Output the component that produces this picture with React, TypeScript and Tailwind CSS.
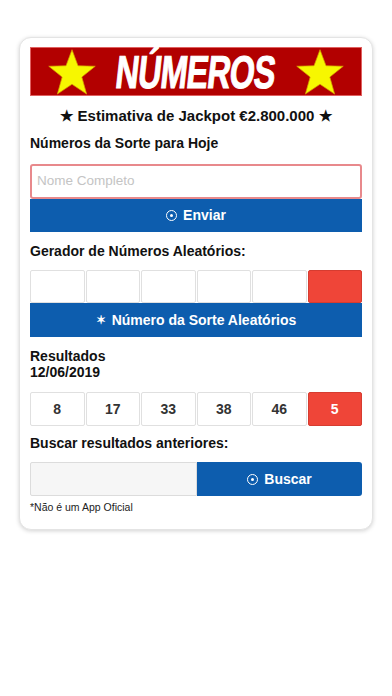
const results = ["8", "17", "33", "38", "46"];

function Star() {
  return (
    <svg viewBox="0 0 100 95" className="h-[46px] w-[48px] shrink-0">
      <polygon
        points="50,1 62.5,34.5 98.5,35.5 70.5,58 80.5,93.5 50,73 19.5,93.5 29.5,58 1.5,35.5 37.5,34.5"
        fill="#f7f700"
        stroke="#d49a00"
        strokeWidth="1.5"
        strokeLinejoin="round"
      />
    </svg>
  );
}

function Dot() {
  return (
    <span className="mr-1.5 inline-flex h-[11px] w-[11px] items-center justify-center rounded-full border-[1.5px] border-white">
      <span className="h-[3px] w-[3px] rounded-full bg-white" />
    </span>
  );
}

export default function App() {
  return (
    <div
      className="min-h-[696px] bg-white pt-[37px]"
      style={{ fontFamily: '"Liberation Sans", Arial, sans-serif' }}
    >
      <div className="mx-[19px] w-[354px] rounded-[12px] border border-[#e4e4e4] bg-white px-[10px] pt-[9px] pb-[15px] shadow-[0_1px_4px_rgba(0,0,0,0.18)]">
        {/* Banner */}
        <div className="flex h-[49px] items-center border border-[#e06060] bg-[#b20000] px-[17px]">
          <Star />
          <div className="flex min-w-0 flex-1 justify-center">
            <span className="inline-block -skew-x-[9deg] scale-x-[0.7] text-[46px] leading-none font-bold tracking-tight whitespace-nowrap text-white [-webkit-text-stroke:1px_white]">
              NÚMEROS
            </span>
          </div>
          <Star />
        </div>

        <p className="mt-[10px] text-center text-[15px] leading-[20px] font-bold text-[#111]">
          ★ Estimativa de Jackpot €2.800.000 ★
        </p>

        <p className="mt-[7px] text-[14px] leading-[20px] font-bold text-[#111]">
          Números da Sorte para Hoje
        </p>

        {/* Name input */}
        <div className="mt-[11px] flex h-[35px] items-center rounded-[3px] border-2 border-[#e8898c] px-[5px] text-[13.5px] text-[#c4c4c4]">
          Nome Completo
        </div>
        <button className="flex h-[33px] w-full items-center justify-center bg-[#0d5dae] text-[14px] font-bold text-white">
          <Dot />
          Enviar
        </button>

        <p className="mt-[9px] text-[14px] leading-[20px] font-bold text-[#111]">
          Gerador de Números Aleatórios:
        </p>

        {/* Random generator */}
        <div className="mt-[9px] grid grid-cols-6 gap-[1px]">
          {[0, 1, 2, 3, 4].map((i) => (
            <div key={i} className="h-[33px] rounded-[2px] border border-[#e0e0e0] bg-white" />
          ))}
          <div className="h-[33px] rounded-[2px] border border-[#d63c30] bg-[#ef4538]" />
        </div>
        <button className="flex h-[34px] w-full items-center justify-center bg-[#0d5dae] text-[14px] font-bold text-white">
          <span className="mr-1.5 text-[12px]">✶</span>
          Número da Sorte Aleatórios
        </button>

        <p className="mt-[11px] text-[14px] leading-[16px] font-bold text-[#111]">
          Resultados
          <br />
          12/06/2019
        </p>

        {/* Results */}
        <div className="mt-[12px] grid grid-cols-6 gap-[1px]">
          {results.map((n) => (
            <div
              key={n}
              className="flex h-[34px] items-center justify-center rounded-[2px] border border-[#e0e0e0] bg-white text-[14px] font-bold text-[#333]"
            >
              {n}
            </div>
          ))}
          <div className="flex h-[34px] items-center justify-center rounded-[2px] border border-[#d63c30] bg-[#ef4538] text-[14px] font-bold text-white">
            5
          </div>
        </div>

        <p className="mt-[7px] text-[14px] leading-[20px] font-bold text-[#111]">
          Buscar resultados anteriores:
        </p>

        {/* Search */}
        <div className="mt-[9px] flex h-[34px]">
          <div className="flex-1 rounded-l-[2px] border border-[#dcdcdc] bg-[#f6f6f6]" />
          <button className="flex flex-1 items-center justify-center rounded-r-[3px] bg-[#0d5dae] text-[14px] font-bold text-white">
            <Dot />
            Buscar
          </button>
        </div>

        <p className="mt-[4px] text-[10.5px] leading-[14px] text-[#222]">*Não é um App Oficial</p>
      </div>
    </div>
  );
}
